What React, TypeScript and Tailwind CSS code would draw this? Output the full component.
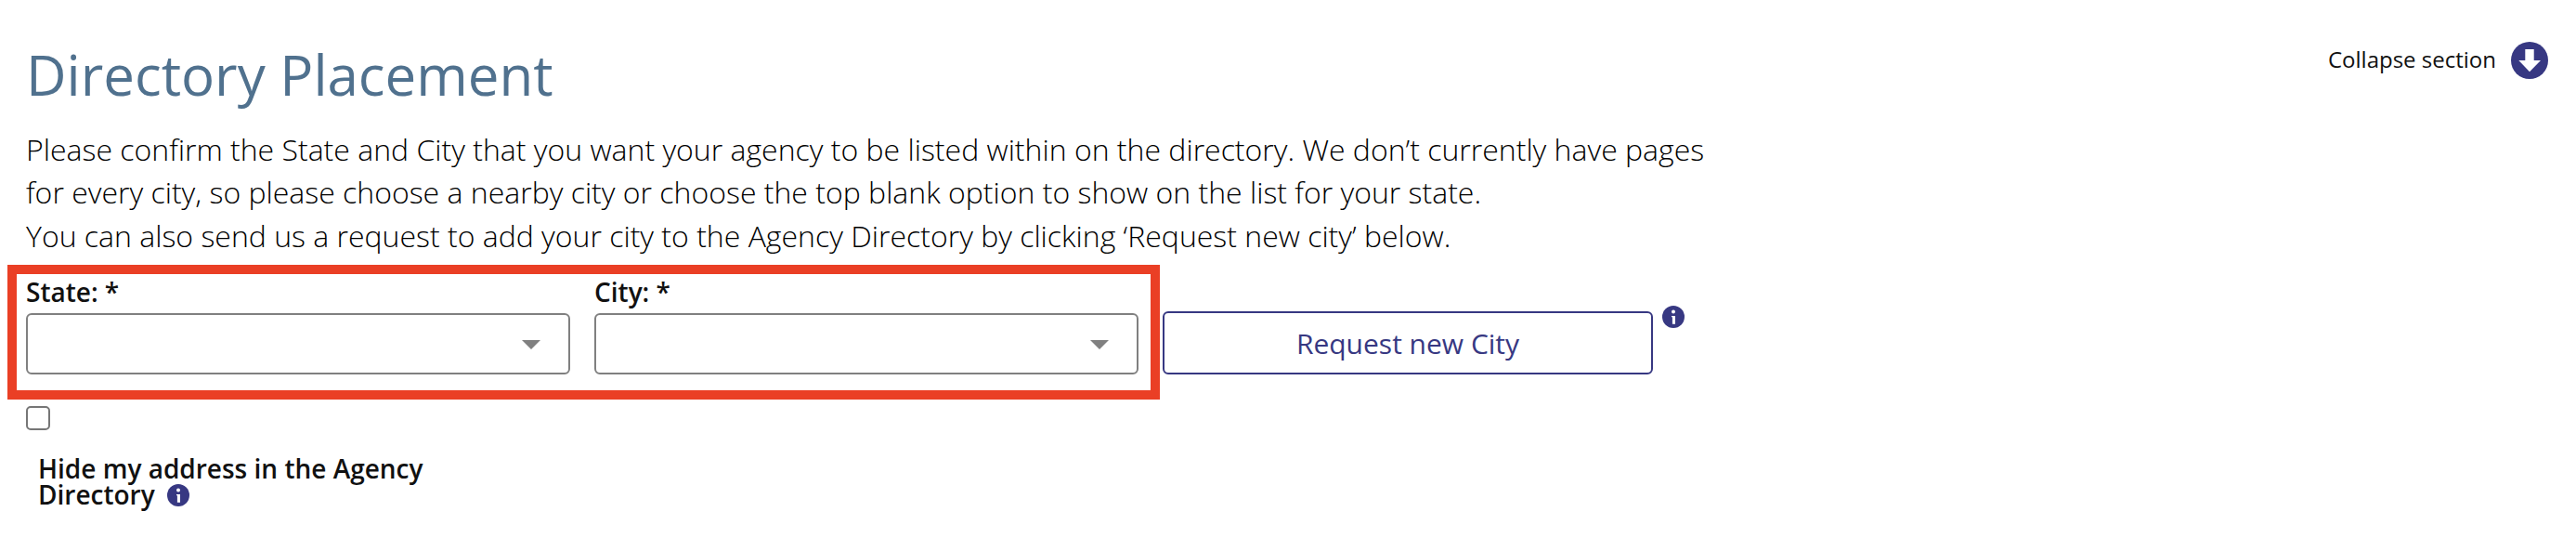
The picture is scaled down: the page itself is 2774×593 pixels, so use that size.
function InfoIcon({ className = "" }: { className?: string }) {
  return (
    <svg viewBox="0 0 24 24" className={`block size-6 shrink-0 ${className}`} aria-hidden="true">
      <circle cx="12" cy="12" r="12" fill="#373882" />
      <circle cx="12" cy="6.6" r="2" fill="#fff" />
      <path d="M10 11H14V19.7H10.9V12.2H10Z" fill="#fff" />
    </svg>
  );
}

function SelectField({ label }: { label: string }) {
  return (
    <div className="flex w-[586px] flex-col">
      <span className="h-[43px] text-[28px] leading-10 font-semibold whitespace-nowrap">{label}</span>
      <button
        type="button"
        aria-label={label}
        className="flex h-[66px] items-center justify-end rounded-[6px] border-2 border-[#808080] bg-white pr-[30px]"
      >
        <svg viewBox="0 0 20 10" className="mt-[2px] h-[10px] w-[20px]" aria-hidden="true">
          <path d="M0 0H20L10 10Z" fill="#808080" />
        </svg>
      </button>
    </div>
  );
}

export default function App() {
  return (
    <main className="relative h-[593px] w-[2774px] overflow-hidden bg-white pl-[28px] font-['Open_Sans',sans-serif] text-[#111111]">
      <header className="flex h-[137px] items-start justify-between pr-[30px]">
        <h1 className="pt-[40px] text-[60px] leading-[80px] font-normal whitespace-nowrap text-[#50718e]">
          Directory Placement
        </h1>
        <div className="flex items-center gap-[16px] pt-[45px]">
          <span className="-mt-[3px] text-[24px] leading-10 whitespace-nowrap">Collapse section</span>
          <svg viewBox="0 0 40 40" className="size-10" aria-hidden="true">
            <circle cx="20" cy="20" r="20" fill="#373882" />
            <path d="M15.3 8H24.7V20H32L20 32.3L8.3 20H15.3Z" fill="#fff" />
          </svg>
        </div>
      </header>

      <div className="flex h-[157px] flex-col pt-[1px] text-[32px] font-light whitespace-nowrap text-black">
        <p className="leading-[46px]">
          Please confirm the State and City that you want your agency to be listed within on the directory. We don’t
          currently have pages
          <br />
          for every city, so please choose a nearby city or choose the top blank option to show on the list for your
          state.
        </p>
        <p className="leading-[48px]">
          You can also send us a request to add your city to the Agency Directory by clicking ‘Request new city’ below.
        </p>
      </div>

      <div className="flex items-end">
        <div className="flex gap-[26px]">
          <SelectField label="State: *" />
          <SelectField label="City: *" />
        </div>
        <button
          type="button"
          className="ml-[26px] h-[68px] w-[528px] rounded-[6px] border-2 border-[#373882] pt-[1px] text-[30px] text-[#373882]"
        >
          Request new City
        </button>
        <InfoIcon className="mb-[50px] ml-[10px]" />
      </div>

      <div className="mt-[34px] size-[26px] rounded-[5px] border-2 border-[#767676]" />
      <div className="mt-[27px] pl-[13px] text-[28px] leading-7 font-semibold whitespace-nowrap">
        <div>Hide my address in the Agency</div>
        <div className="flex">
          Directory
          <InfoIcon className="mt-[3px] ml-[13px]" />
        </div>
      </div>

      <div className="pointer-events-none absolute top-[285px] left-[8px] h-[145px] w-[1241px] border-10 border-[#ea3f25]" />
    </main>
  );
}
